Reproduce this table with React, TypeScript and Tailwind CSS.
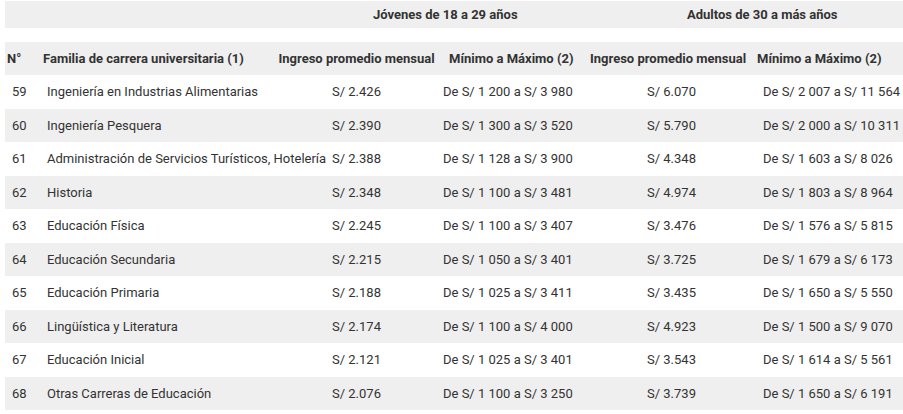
const rows: [string, string, string, string, string, string][] = [
  ["59", "Ingeniería en Industrias Alimentarias", "S/ 2.426", "De S/ 1 200 a S/ 3 980", "S/ 6.070", "De S/ 2 007 a S/ 11 564"],
  ["60", "Ingeniería Pesquera", "S/ 2.390", "De S/ 1 300 a S/ 3 520", "S/ 5.790", "De S/ 2 000 a S/ 10 311"],
  ["61", "Administración de Servicios Turísticos, Hotelería", "S/ 2.388", "De S/ 1 128 a S/ 3 900", "S/ 4.348", "De S/ 1 603 a S/ 8 026"],
  ["62", "Historia", "S/ 2.348", "De S/ 1 100 a S/ 3 481", "S/ 4.974", "De S/ 1 803 a S/ 8 964"],
  ["63", "Educación Física", "S/ 2.245", "De S/ 1 100 a S/ 3 407", "S/ 3.476", "De S/ 1 576 a S/ 5 815"],
  ["64", "Educación Secundaria", "S/ 2.215", "De S/ 1 050 a S/ 3 401", "S/ 3.725", "De S/ 1 679 a S/ 6 173"],
  ["65", "Educación Primaria", "S/ 2.188", "De S/ 1 025 a S/ 3 411", "S/ 3.435", "De S/ 1 650 a S/ 5 550"],
  ["66", "Lingüística y Literatura", "S/ 2.174", "De S/ 1 100 a S/ 4 000", "S/ 4.923", "De S/ 1 500 a S/ 9 070"],
  ["67", "Educación Inicial", "S/ 2.121", "De S/ 1 025 a S/ 3 401", "S/ 3.543", "De S/ 1 614 a S/ 5 561"],
  ["68", "Otras Carreras de Educación", "S/ 2.076", "De S/ 1 100 a S/ 3 250", "S/ 3.739", "De S/ 1 650 a S/ 6 191"],
];

export default function App() {
  return (
    <div
      className="w-[903px] h-[414px] bg-white text-[#333] text-[13px] overflow-hidden pt-px pl-[5px]"
      style={{ fontFamily: "Roboto, 'Liberation Sans', sans-serif" }}
    >
      <div className="w-[898px]">
        {/* grupos de edad */}
        <div className="flex h-[27px] bg-[#efefef] font-bold pt-[4px] whitespace-nowrap">
          <div className="w-[368px]" />
          <div className="w-[314px]">Jóvenes de 18 a 29 años</div>
          <div>Adultos de 30 a más años</div>
        </div>

        {/* encabezado */}
        <div className="mt-[14px] flex items-center h-[33px] bg-[#efefef] font-bold whitespace-nowrap">
          <div className="w-[38px] pl-[2px]">N°</div>
          <div className="w-[235.5px]">Familia de carrera universitaria (1)</div>
          <div className="w-[170.5px]">Ingreso promedio mensual</div>
          <div className="w-[141px]">Mínimo a Máximo (2)</div>
          <div className="w-[167px]">Ingreso promedio mensual</div>
          <div>Mínimo a Máximo (2)</div>
        </div>

        {rows.map((r, i) => (
          <div
            key={r[0]}
            className={`flex items-center h-[33.5px] whitespace-nowrap ${i % 2 ? "bg-[#efefef]" : "bg-white"}`}
          >
            <div className="w-[42px] pl-[7px]">{r[0]}</div>
            <div className="w-[285px]">{r[1]}</div>
            <div className="w-[111px]">{r[2]}</div>
            <div className="w-[204px]">{r[3]}</div>
            <div className="w-[116px]">{r[4]}</div>
            <div>{r[5]}</div>
          </div>
        ))}
      </div>
    </div>
  );
}
